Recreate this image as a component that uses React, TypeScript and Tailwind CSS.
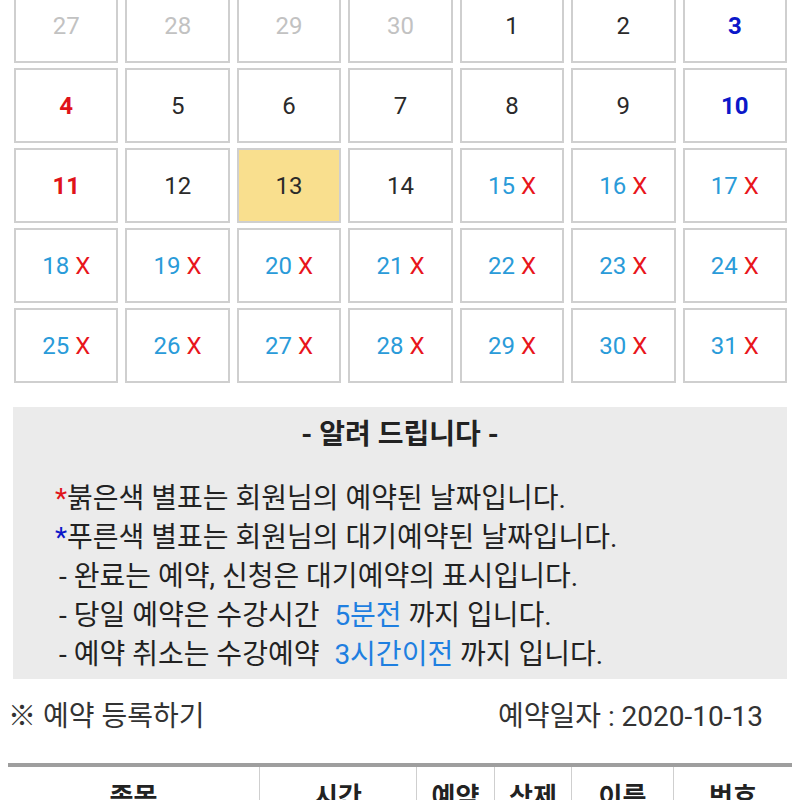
import React from 'react';

type Day = { n: number; kind: 'prev' | 'normal' | 'sun' | 'sat' | 'today' | 'full' };

const days: Day[] = [
  { n: 27, kind: 'prev' },
  { n: 28, kind: 'prev' },
  { n: 29, kind: 'prev' },
  { n: 30, kind: 'prev' },
  { n: 1, kind: 'normal' },
  { n: 2, kind: 'normal' },
  { n: 3, kind: 'sat' },
  { n: 4, kind: 'sun' },
  { n: 5, kind: 'normal' },
  { n: 6, kind: 'normal' },
  { n: 7, kind: 'normal' },
  { n: 8, kind: 'normal' },
  { n: 9, kind: 'normal' },
  { n: 10, kind: 'sat' },
  { n: 11, kind: 'sun' },
  { n: 12, kind: 'normal' },
  { n: 13, kind: 'today' },
  { n: 14, kind: 'normal' },
  ...Array.from({ length: 17 }, (_, i) => ({ n: 15 + i, kind: 'full' as const })),
];

function DayCell({ day }: { day: Day }) {
  const base =
    'h-[75px] border-2 border-[#cfcfcf] flex items-center justify-center text-[24px]';
  if (day.kind === 'today') {
    return <div className={`${base} bg-[#f9df8e] text-[#2a2a2a]`}>{day.n}</div>;
  }
  if (day.kind === 'full') {
    return (
      <div className={`${base} bg-white`}>
        <span className="text-[#2a9bd9]">{day.n}</span>
        <span className="ml-[6px] text-[#e8151b]">X</span>
      </div>
    );
  }
  const color =
    day.kind === 'prev'
      ? 'text-[#c2c2c2]'
      : day.kind === 'sun'
        ? 'text-[#e0131a] font-bold'
        : day.kind === 'sat'
          ? 'text-[#0b17c9] font-bold'
          : 'text-[#2a2a2a]';
  return <div className={`${base} bg-white ${color}`}>{day.n}</div>;
}

export default function App() {
  return (
    <div className="w-[800px] h-[800px] overflow-hidden bg-white font-['Roboto','Noto_Sans_CJK_KR',sans-serif]">
      <div className="-mt-[12px] ml-[14px] w-[773px] grid grid-cols-7 gap-x-[7px] gap-y-[5px]">
        {days.map((d) => (
          <DayCell key={`${d.kind}-${d.n}`} day={d} />
        ))}
      </div>

      <div className="mt-[24px] ml-[13px] w-[774px] h-[272px] bg-[#ebebeb] pt-[9px] text-[28px] text-[#222]">
        <div className="text-center font-bold leading-[38px]">- 알려 드립니다 -</div>
        <div className="mt-[25px] pl-[42px] leading-[39px]">
          <div>
            <span className="text-[#e0131a]">*</span>붉은색 별표는 회원님의 예약된 날짜입니다.
          </div>
          <div>
            <span className="text-[#0b17c9]">*</span>푸른색 별표는 회원님의 대기예약된 날짜입니다.
          </div>
          <div className="pl-[4px]">- 완료는 예약, 신청은 대기예약의 표시입니다.</div>
          <div className="pl-[4px]">
            - 당일 예약은 수강시간 <span className="ml-[8px] text-[#1f7fe0]">5분전</span> 까지 입니다.
          </div>
          <div className="pl-[4px]">
            - 예약 취소는 수강예약 <span className="ml-[8px] text-[#1f7fe0]">3시간이전</span> 까지 입니다.
          </div>
        </div>
      </div>

      <div className="mt-[19px] flex items-center justify-between pl-[8px] pr-[37px] h-[38px] text-[28px] text-[#333]">
        <span>※ 예약 등록하기</span>
        <span>예약일자 : 2020-10-13</span>
      </div>

      <div className="mt-[27px] ml-[8px] w-[784px] border-t-4 border-[#9e9e9e] grid grid-cols-[252px_157px_78px_77px_102px_118px] text-[26px] font-bold text-[#222]">
        {['종목', '시간', '예약', '삭제', '이름', '번호'].map((h, i) => (
          <div
            key={h}
            className={`h-[60px] flex items-center justify-center ${i < 5 ? 'border-r border-[#cfcfcf]' : ''}`}
          >
            {h}
          </div>
        ))}
      </div>
    </div>
  );
}
